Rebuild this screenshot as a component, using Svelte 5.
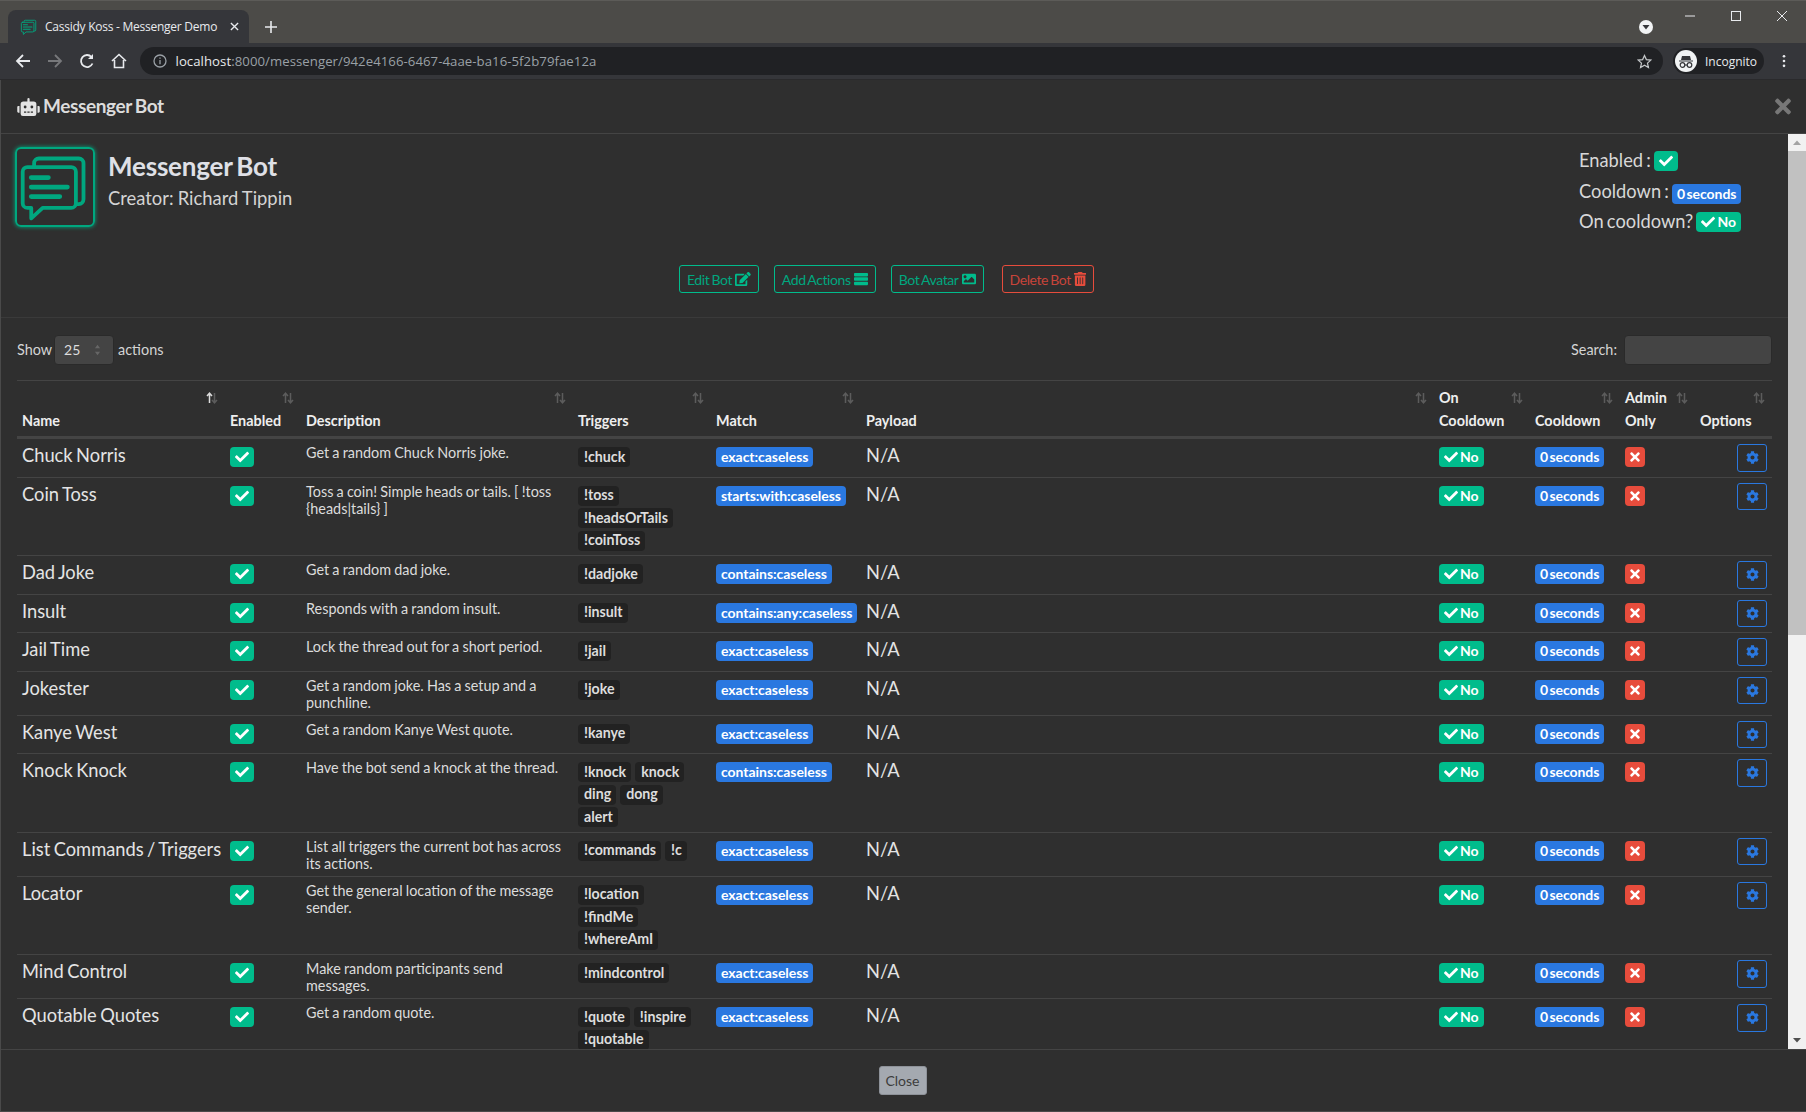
<script>
  const rows = [
    { name: 'Chuck Norris', desc: 'Get a random Chuck Norris joke.', trig: [['!chuck']], match: 'exact:caseless' },
    { name: 'Coin Toss', desc: 'Toss a coin! Simple heads or tails. [ !toss {heads|tails} ]', trig: [['!toss'], ['!headsOrTails'], ['!coinToss']], match: 'starts:with:caseless' },
    { name: 'Dad Joke', desc: 'Get a random dad joke.', trig: [['!dadjoke']], match: 'contains:caseless' },
    { name: 'Insult', desc: 'Responds with a random insult.', trig: [['!insult']], match: 'contains:any:caseless' },
    { name: 'Jail Time', desc: 'Lock the thread out for a short period.', trig: [['!jail']], match: 'exact:caseless' },
    { name: 'Jokester', desc: 'Get a random joke. Has a setup and a punchline.', trig: [['!joke']], match: 'exact:caseless' },
    { name: 'Kanye West', desc: 'Get a random Kanye West quote.', trig: [['!kanye']], match: 'exact:caseless' },
    { name: 'Knock Knock', desc: 'Have the bot send a knock at the thread.', trig: [['!knock', 'knock'], ['ding', 'dong'], ['alert']], match: 'contains:caseless' },
    { name: 'List Commands / Triggers', desc: 'List all triggers the current bot has across its actions.', trig: [['!commands', '!c']], match: 'exact:caseless' },
    { name: 'Locator', desc: 'Get the general location of the message sender.', trig: [['!location'], ['!findMe'], ['!whereAmI']], match: 'exact:caseless' },
    { name: 'Mind Control', desc: 'Make random participants send messages.', trig: [['!mindcontrol']], match: 'exact:caseless' },
    { name: 'Quotable Quotes', desc: 'Get a random quote.', trig: [['!quote', '!inspire'], ['!quotable']], match: 'exact:caseless' }
  ];
  const heads = [
    ['Name'], ['Enabled'], ['Description'], ['Triggers'], ['Match'], ['Payload'],
    ['On', 'Cooldown'], ['Cooldown'], ['Admin', 'Only'], ['Options']
  ];
  const check = 'M173.898 439.404l-166.4-166.4c-9.997-9.997-9.997-26.206 0-36.204l36.203-36.204c9.997-9.998 26.207-9.998 36.204 0L192 312.69 432.095 72.596c9.997-9.997 26.207-9.997 36.204 0l36.203 36.204c9.997 9.997 9.997 26.206 0 36.204l-294.4 294.401c-9.998 9.997-26.207 9.997-36.204-.001z';
  const times = 'M242.72 256l100.07-100.07c12.28-12.28 12.28-32.19 0-44.48l-22.24-22.24c-12.28-12.28-32.19-12.28-44.48 0L176 189.28 75.93 89.21c-12.28-12.28-32.19-12.28-44.48 0L9.21 111.45c-12.28 12.28-12.28 32.19 0 44.48L109.28 256 9.21 356.07c-12.28 12.28-12.28 32.19 0 44.48l22.24 22.24c12.28 12.28 32.2 12.28 44.48 0L176 322.72l100.07 100.07c12.28 12.28 32.2 12.28 44.48 0l22.24-22.24c12.28-12.28 12.28-32.19 0-44.48L242.72 256z';
  const cog = 'M487.4 315.7l-42.6-24.6c4.3-23.2 4.3-47 0-70.2l42.6-24.6c4.9-2.8 7.1-8.6 5.5-14-11.1-35.6-30-67.8-54.7-94.6-3.8-4.1-10-5.1-14.8-2.3L380.8 110c-17.9-15.4-38.5-27.3-60.8-35.1V25.8c0-5.6-3.9-10.5-9.4-11.7-36.7-8.2-74.3-7.8-109.2 0-5.5 1.2-9.4 6.1-9.4 11.7V75c-22.2 7.9-42.8 19.8-60.8 35.1L88.7 85.5c-4.9-2.8-11-1.9-14.8 2.3-24.7 26.7-43.6 58.9-54.7 94.6-1.7 5.4.6 11.2 5.5 14L67.3 221c-4.3 23.2-4.3 47 0 70.2l-42.6 24.6c-4.9 2.8-7.1 8.6-5.5 14 11.1 35.6 30 67.8 54.7 94.6 3.8 4.1 10 5.1 14.8 2.3l42.6-24.6c17.9 15.4 38.5 27.3 60.8 35.1v49.2c0 5.6 3.9 10.5 9.4 11.7 36.7 8.2 74.3 7.8 109.2 0 5.5-1.2 9.4-6.1 9.4-11.7v-49.2c22.2-7.9 42.8-19.8 60.8-35.1l42.6 24.6c4.9 2.8 11 1.9 14.8-2.3 24.7-26.7 43.6-58.9 54.7-94.6 1.5-5.5-.7-11.3-5.6-14.1zM256 336c-44.1 0-80-35.9-80-80s35.9-80 80-80 80 35.9 80 80-35.9 80-80 80z';
  const edit = 'M402.6 83.2l90.2 90.2c3.8 3.8 3.8 10 0 13.8L274.4 405.6l-92.8 10.3c-12.4 1.4-22.9-9.1-21.5-21.5l10.3-92.8L388.8 83.2c3.8-3.8 10-3.8 13.8 0zm162-22.9l-48.8-48.8c-15.2-15.2-39.9-15.2-55.2 0l-35.4 35.4c-3.8 3.8-3.8 10 0 13.8l90.2 90.2c3.8 3.8 10 3.8 13.8 0l35.4-35.4c15.2-15.3 15.2-40 0-55.2zM384 346.2V448H64V128h229.8c3.2 0 6.2-1.3 8.5-3.5l40-40c7.6-7.6 2.2-20.5-8.5-20.5H48C21.5 64 0 85.5 0 112v352c0 26.5 21.5 48 48 48h352c26.5 0 48-21.5 48-48V306.2c0-10.7-12.9-16-20.5-8.5l-40 40c-2.2 2.3-3.5 5.3-3.5 8.5z';
  const image = 'M464 448H48c-26.51 0-48-21.49-48-48V112c0-26.51 21.49-48 48-48h416c26.51 0 48 21.49 48 48v288c0 26.51-21.49 48-48 48zM112 120c-30.928 0-56 25.072-56 56s25.072 56 56 56 56-25.072 56-56-25.072-56-56-56zM64 384h384V272l-87.515-87.515c-4.686-4.686-12.284-4.686-16.971 0L208 320l-55.515-55.515c-4.686-4.686-12.284-4.686-16.971 0L64 336v48z';
  const trash = 'M32 464a48 48 0 0 0 48 48h288a48 48 0 0 0 48-48V128H32zm272-256a16 16 0 0 1 32 0v224a16 16 0 0 1-32 0zm-96 0a16 16 0 0 1 32 0v224a16 16 0 0 1-32 0zm-96 0a16 16 0 0 1 32 0v224a16 16 0 0 1-32 0zM432 32H312l-9.4-18.7A24 24 0 0 0 281.1 0H166.8a23.72 23.72 0 0 0-21.4 13.3L136 32H16A16 16 0 0 0 0 48v32a16 16 0 0 0 16 16h416a16 16 0 0 0 16-16V48a16 16 0 0 0-16-16z';
  const robot = 'M32,224H64V416H32A31.96166,31.96166,0,0,1,0,384V256A31.96166,31.96166,0,0,1,32,224Zm512-48V448a64.06328,64.06328,0,0,1-64,64H160a64.06328,64.06328,0,0,1-64-64V176a79.974,79.974,0,0,1,80-80H288V32a32,32,0,0,1,64,0V96H464A79.974,79.974,0,0,1,544,176ZM264,256a40,40,0,1,0-40,40A39.997,39.997,0,0,0,264,256Zm-8,128H192v32h64Zm96,0H288v32h64ZM456,256a40,40,0,1,0-40,40A39.997,39.997,0,0,0,456,256Zm-8,128H384v32h64ZM640,256V384a31.96166,31.96166,0,0,1-32,32H576V224h32A31.96166,31.96166,0,0,1,640,256Z';
</script>

{#snippet bubbles(cls)}
  <svg class={cls} viewBox="0 0 80 80" fill="none" stroke="#00a77f" stroke-width="4" stroke-linejoin="round" stroke-linecap="round">
    <path d="M18 19v-4a5 5 0 0 1 5-5h42a5 5 0 0 1 5 5v38a5 5 0 0 1-5 5h-3" />
    <path d="M11 19h46a5 5 0 0 1 5 5v33a5 5 0 0 1-5 5H27L15 73V62h-4a5 5 0 0 1-5-5V24a5 5 0 0 1 5-5z" />
    <path d="M15 30h18M15 40h38M15 50h30" stroke-width="5" />
  </svg>
{/snippet}

{#snippet sortIcon(active)}
  <svg class="sort" viewBox="0 0 12 12" fill="none" stroke-width="1.5">
    <path d="M3.5 11V1.5M1 4l2.5-2.8L6 4" stroke={active ? '#dddddd' : '#5c5c5c'} />
    <path d="M8.5 1v9.5M6 8l2.5 2.8L11 8" stroke="#5c5c5c" />
  </svg>
{/snippet}

<div class="page">
  <div class="tabstrip">
    <div class="tab">
      {@render bubbles('favicon')}
      <span class="tabtitle">Cassidy Koss - Messenger Demo</span>
      <svg class="tabclose" viewBox="0 0 10 10" stroke="#e8eaed" stroke-width="1.5"><path d="M1 1l8 8M9 1l-8 8" /></svg>
    </div>
    <svg class="newtab" viewBox="0 0 12 12" stroke="#e8eaed" stroke-width="1.6"><path d="M6 0v12M0 6h12" /></svg>
    <div class="grow"></div>
    <div class="searchtabs"><svg viewBox="0 0 14 14"><circle cx="7" cy="7" r="7" fill="#f1f3f4" /><path d="M3.5 5h7L7 9.5z" fill="#35363a" /></svg></div>
    <div class="winctl">
      <svg viewBox="0 0 12 12" stroke="#e8eaed" stroke-width="1"><path d="M1 6h10" /></svg>
      <svg viewBox="0 0 12 12" stroke="#e8eaed" stroke-width="1" fill="none"><rect x="1.5" y="1.5" width="9" height="9" /></svg>
      <svg viewBox="0 0 12 12" stroke="#e8eaed" stroke-width="1"><path d="M1 1l10 10M11 1L1 11" /></svg>
    </div>
  </div>
  <div class="toolbar">
    <svg class="nav" viewBox="0 0 16 16" fill="none" stroke="#e8eaed" stroke-width="1.8"><path d="M15 8H2M8 2L2 8l6 6" /></svg>
    <svg class="nav" viewBox="0 0 16 16" fill="none" stroke="#77787b" stroke-width="1.8"><path d="M1 8h13M8 2l6 6-6 6" /></svg>
    <svg class="nav" viewBox="0 0 16 16" fill="none" stroke="#e8eaed" stroke-width="1.8"><path d="M13.5 10.5A6 6 0 1 1 12.5 4" /><path d="M14 1v5H9" fill="#e8eaed" stroke="none" /></svg>
    <svg class="nav" viewBox="0 0 16 16" fill="none" stroke="#e8eaed" stroke-width="1.6"><path d="M1 8l7-6.5L15 8M3.5 7v7.5h9V7" /></svg>
    <div class="omni">
      <svg class="info" viewBox="0 0 14 14" fill="none" stroke="#9aa0a6" stroke-width="1.3"><circle cx="7" cy="7" r="6" /><path d="M7 6v4.2M7 3.6v1.2" /></svg>
      <span class="url"><span class="host">localhost</span>:8000/messenger/942e4166-6467-4aae-ba16-5f2b79fae12a</span>
      <div class="grow"></div>
      <svg class="star" viewBox="0 0 16 16" fill="none" stroke="#c4c7c9" stroke-width="1.3"><path d="M8 1.6l2 4.4 4.7.5-3.5 3.2 1 4.7L8 12l-4.200 2.400 1-4.700L1.300 6.500 6 6z" /></svg>
    </div>
    <div class="incog">
      <svg viewBox="0 0 22 22"><circle cx="11" cy="11" r="11" fill="#f1f3f4" /><path d="M4 10.500h14v1H4zM7 6h8l1 4H6z" fill="#35363a" /><g fill="none" stroke="#35363a" stroke-width="1.200"><circle cx="7.500" cy="15" r="2.300" /><circle cx="14.500" cy="15" r="2.300" /><path d="M9.800 15h2.400" /></g></svg>
      <span>Incognito</span>
    </div>
    <svg class="dots" viewBox="0 0 4 16" fill="#e8eaed"><circle cx="2" cy="2.500" r="1.500" /><circle cx="2" cy="8" r="1.500" /><circle cx="2" cy="13.500" r="1.500" /></svg>
  </div>

  <div class="modal">
    <header class="mhead">
      <svg class="robot" viewBox="0 0 640 512" fill="#e4e4e4"><path d={robot} /></svg>
      <h5>Messenger Bot</h5>
      <div class="grow"></div>
      <svg class="mclose" viewBox="0 0 352 512" fill="#777"><path d={times} /></svg>
    </header>

    <div class="mbody">
      <div class="scroll">
        <section class="profile">
          <div class="logo">{@render bubbles('logoimg')}</div>
          <div class="who">
            <h3>Messenger Bot</h3>
            <p>Creator: Richard Tippin</p>
          </div>
          <div class="grow"></div>
          <div class="status">
            <div>Enabled : <span class="badge green icononly"><svg viewBox="0 0 512 512"><path d={check} /></svg></span></div>
            <div>Cooldown : <span class="badge blue">0 seconds</span></div>
            <div>On cooldown? <span class="badge green"><svg viewBox="0 0 512 512"><path d={check} /></svg>No</span></div>
          </div>
        </section>

        <section class="actions">
          <button class="btn teal">Edit Bot <svg viewBox="0 0 576 512"><path d={edit} /></svg></button>
          <button class="btn teal">Add Actions <svg viewBox="0 0 512 512"><rect y="32" width="512" height="128" rx="28" /><rect y="192" width="512" height="128" rx="28" /><rect y="352" width="512" height="128" rx="28" /></svg></button>
          <button class="btn teal">Bot Avatar <svg viewBox="0 0 512 512"><path d={image} /></svg></button>
          <button class="btn red">Delete Bot <svg viewBox="0 0 448 512"><path d={trash} /></svg></button>
        </section>

        <hr class="faint" />

        <section class="controls">
          <label class="ctl">Show <span class="select">25<svg viewBox="0 0 8 14" fill="#666"><path d="M4 1l3 4H1zM4 13l3-4H1z" /></svg></span> actions</label>
          <label class="ctl">Search: <input class="search" aria-label="Search" /></label>
        </section>

        <table>
          <colgroup>
            <col style="width:208px" /><col style="width:76px" /><col style="width:272px" /><col style="width:138px" /><col style="width:150px" /><col /><col style="width:96px" /><col style="width:90px" /><col style="width:75px" /><col style="width:77px" />
          </colgroup>
          <thead>
            <tr>
              {#each heads as h, i}
                <th>
                  {#each h as l}<div>{l}</div>{/each}
                  {@render sortIcon(i === 0)}
                </th>
              {/each}
            </tr>
          </thead>
          <tbody>
            {#each rows as r}
              <tr>
                <td class="big">{r.name}</td>
                <td><span class="badge green icononly cellb"><svg viewBox="0 0 512 512"><path d={check} /></svg></span></td>
                <td class="desc">{r.desc}</td>
                <td class="trig">
                  {#each r.trig as line}
                    <div class="tline">{#each line as t}<span class="tag">{t}</span>{/each}</div>
                  {/each}
                </td>
                <td><span class="badge blue cellb">{r.match}</span></td>
                <td class="big">N/A</td>
                <td><span class="badge green cellb"><svg viewBox="0 0 512 512"><path d={check} /></svg>No</span></td>
                <td><span class="badge blue cellb">0 seconds</span></td>
                <td><span class="badge redb cellb"><svg viewBox="0 0 352 512"><path d={times} /></svg></span></td>
                <td class="opt"><button class="gear" aria-label="Options"><svg viewBox="0 0 512 512"><path d={cog} /></svg></button></td>
              </tr>
            {/each}
          </tbody>
        </table>
      </div>
      <div class="sbar">
        <svg class="sarrow" viewBox="0 0 18 17"><path d="M5 11l4-4.500 4 4.500z" fill="#a3a3a3" /></svg>
        <div class="thumb"></div>
        <div class="grow"></div>
        <svg class="sarrow" viewBox="0 0 18 17"><path d="M5 6l4 4.500L13 6z" fill="#505050" /></svg>
      </div>
    </div>

    <footer class="mfoot"><button class="close">Close</button></footer>
  </div>
</div>

<style>
  :global(body) { margin: 0; background: #2f2f2f; }
  .page { width: 1806px; height: 1112px; display: flex; flex-direction: column; overflow: hidden; font-family: Lato, "Open Sans", sans-serif; color: #e0e0e0; }
  .grow { flex: 1; }

  .tabstrip { height: 43px; box-sizing: border-box; padding-top: 9px; background: #4c4b48; border-top: 1px solid #5c5b58; display: flex; align-items: stretch; padding-left: 8px; position: relative; }
  .tab { width: 241px; box-sizing: border-box; background: #35363a; border-radius: 8px 8px 0 0; display: flex; align-items: center; padding: 0 10px 0 12px; gap: 7px; }
  :global(.favicon) { width: 18px; height: 18px; }
  .tabtitle { font: 12px "Open Sans", sans-serif; color: #e8eaed; white-space: nowrap; letter-spacing: -0.25px; flex: 1; }
  .tabclose { width: 9px; height: 9px; }
  .newtab { width: 12px; height: 12px; align-self: center; margin-left: 16px; margin-top: 1px; }
  .searchtabs { align-self: center; margin-right: 153px; display: flex; }
  .searchtabs svg { width: 14px; height: 14px; }
  .winctl { position: absolute; right: 18px; top: 9px; display: flex; gap: 34px; }
  .winctl svg { width: 12px; height: 12px; }

  .toolbar { height: 37px; box-sizing: border-box; background: #35363a; display: flex; align-items: center; padding-left: 15px; border-bottom: 1px solid #2a2a2c; }
  .nav { width: 16px; height: 16px; margin-right: 16px; flex: none; }
  .omni { margin-left: -3px; width: 1523px; height: 28px; border-radius: 14px; background: #202124; display: flex; align-items: center; padding: 0 10px 0 12.5px; box-sizing: border-box; }
  .info { width: 14px; height: 14px; margin-right: 9px; }
  .url { font: 13.2px "Open Sans", sans-serif; color: #9aa0a6; letter-spacing: 0.05px; }
  .host { color: #e8eaed; }
  .star { width: 15px; height: 15px; margin-right: 1px; }
  .incog { margin-left: 10px; width: 91px; height: 26px; border-radius: 13px; background: #202124; display: flex; align-items: center; gap: 8px; padding-left: 2px; box-sizing: border-box; font: 12px "Open Sans", sans-serif; color: #e8eaed; }
  .incog svg { width: 22px; height: 22px; }
  .dots { width: 4px; height: 14px; margin-left: 18px; }

  .modal { flex: 1; min-height: 0; display: flex; flex-direction: column; background: #2f2f2f; border-left: 1px solid #4a4a4a; border-bottom: 1px solid #4a4a4a; }
  .mhead { height: 54px; flex: none; box-sizing: border-box; border-bottom: 1px solid #444; display: flex; align-items: center; padding-left: 16px; padding-right: 15px; }
  .robot { width: 23px; height: 18px; margin-right: 3px; }
  h5 { margin: 0 0 2px; font-size: 19px; font-weight: 700; color: #dcdcdc; letter-spacing: -0.4px; word-spacing: -1px; }
  .mclose { width: 16px; height: 23px; }

  .mbody { flex: 1; min-height: 0; display: flex; }
  .scroll { flex: 1; min-width: 0; overflow: hidden; padding: 0 16px; }
  .sbar { width: 18px; flex: none; background: #f1f1f1; display: flex; flex-direction: column; }
  .sarrow { width: 18px; height: 17px; flex: none; }
  .thumb { height: 484px; background: #c1c1c1; flex: none; }

  .profile { display: flex; padding-top: 13px; height: 80px; box-sizing: content-box; }
  .logo { width: 80px; height: 80px; margin-left: -2px; box-sizing: border-box; border: 2px solid #00a77f; border-radius: 6px; box-shadow: 0 0 4px #00a77f; flex: none; }
  :global(.logoimg) { display: block; width: 76px; height: 76px; }
  .who { margin-left: 13px; padding-top: 4px; }
  h3 { margin: 0; font-size: 26px; line-height: 31px; font-weight: 700; color: #dfe0e6; letter-spacing: -0.2px; word-spacing: -2px; }
  .who p { margin: 5px 0 0; font-size: 18.4px; line-height: 22px; color: #d4d4d4; word-spacing: -0.6px; }
  .status { font-size: 18.3px; word-spacing: -1.5px; line-height: 30.5px; width: 193px; flex: none; margin-right: 0; margin-top: -2px; color: #d8d8d8; }
  .status .badge { vertical-align: -1px; }

  .badge { display: inline-flex; align-items: center; justify-content: center; height: 20px; box-sizing: border-box; padding: 0 5px; border-radius: 4px; font-size: 14px; font-weight: 700; color: #fff; vertical-align: -2px; white-space: nowrap; line-height: 1; word-spacing: -2px; letter-spacing: -0.05px; }
  .badge svg { height: 14px; width: 14px; fill: #fff; margin-right: 2px; }
  .green { background: #00bc8c; }
  .blue { background: #2a78e0; }
  .redb { background: #e74c3c; padding: 0; width: 20px; }
  .redb svg { margin: 0; width: 10px; }
  .icononly { width: 24px; padding: 0; }
  .icononly svg { margin: 0; }
  .cellb { margin-top: 3px; display: inline-flex; vertical-align: top; }

  .actions { display: flex; justify-content: center; gap: 15px; margin-top: 38px; padding-right: 8px; margin-left: -8px; }
  .btn { height: 28px; box-sizing: border-box; padding: 0 7px; background: transparent; border-radius: 3px; font: 14px Lato, sans-serif; letter-spacing: -0.4px; word-spacing: -1px; display: inline-flex; align-items: center; gap: 3px; white-space: nowrap; }
  .btn svg { height: 14px; width: auto; }
  .teal { border: 1px solid #00bc8c; color: #00a77f; }
  .teal svg { fill: #00bc8c; }
  .red { border: 1px solid #e74c3c; color: #c8443a; margin-left: 3px; }
  .red svg { fill: #e74c3c; }

  .faint { border: 0; border-top: 1px solid #3a3a3a; margin: 24px -16px 0; }
  .controls { display: flex; justify-content: space-between; align-items: center; margin-top: 16px; height: 31px; font-size: 14.4px; color: #d4d4d4; }
  .ctl { display: flex; align-items: center; gap: 3px; }
  .select { width: 60px; height: 30px; margin-left: -1px; margin-right: 1px; box-sizing: border-box; background: #444; border: 1px solid #2a2a2a; border-radius: 4px; display: flex; align-items: center; justify-content: space-between; padding: 0 12px 0 9px; font-size: 14px; color: #ddd; }
  .select svg { width: 7px; height: 12px; }
  .search { width: 148px; height: 30px; box-sizing: border-box; background: #444; border: 1px solid #2a2a2a; border-radius: 4px; margin-left: 4px; }

  table { width: 1755px; table-layout: fixed; border-collapse: collapse; margin-top: 15px; border-top: 1px solid #444; font-size: 14.4px; }
  th { position: relative; text-align: left; vertical-align: bottom; padding: 5px 5px 4px; font-size: 14.4px; font-weight: 700; line-height: 23px; color: #eee; border-bottom: 3px solid #444; white-space: nowrap; }
  .sort { position: absolute; right: 7px; top: 11px; width: 12px; height: 12px; }
  td { padding: 5px; vertical-align: top; border-top: 1px solid #444; line-height: 17px; }
  tbody tr:first-child td { border-top: 0; }
  .big { font-size: 18.3px; word-spacing: -1.2px; line-height: 22px; color: #e4e4e4; white-space: nowrap; }
  .desc { color: #dcdcdc; word-spacing: -0.5px; padding-bottom: 4px; }
  .tline { display: flex; gap: 4px; height: 22.5px; }
  .trig { padding-bottom: 5px; }
  .tag { display: inline-flex; align-items: center; height: 20px; margin-top: 3px; padding: 0 5px 0 6px; background: #222; border-radius: 4px; font-size: 14.2px; font-weight: 700; color: #ddd; line-height: 1; white-space: nowrap; }
  .opt { text-align: right; }
  .gear { width: 30px; height: 27.5px; margin-left: auto; box-sizing: border-box; padding: 0; background: transparent; border: 1px solid #2a78e0; border-radius: 3px; display: flex; align-items: center; justify-content: center; }
  .gear svg { width: 13px; height: 13px; fill: #2a78e0; }

  .mfoot { height: 62px; flex: none; box-sizing: border-box; border-top: 1px solid #444; display: flex; justify-content: center; align-items: flex-start; padding-top: 16px; }
  .close { width: 48px; height: 29px; background: #a4a9b0; border: 1px solid #8e9299; border-radius: 3px; font: 14px Lato, sans-serif; color: #3c3c3c; padding: 0; margin-left: -2px; }
</style>
